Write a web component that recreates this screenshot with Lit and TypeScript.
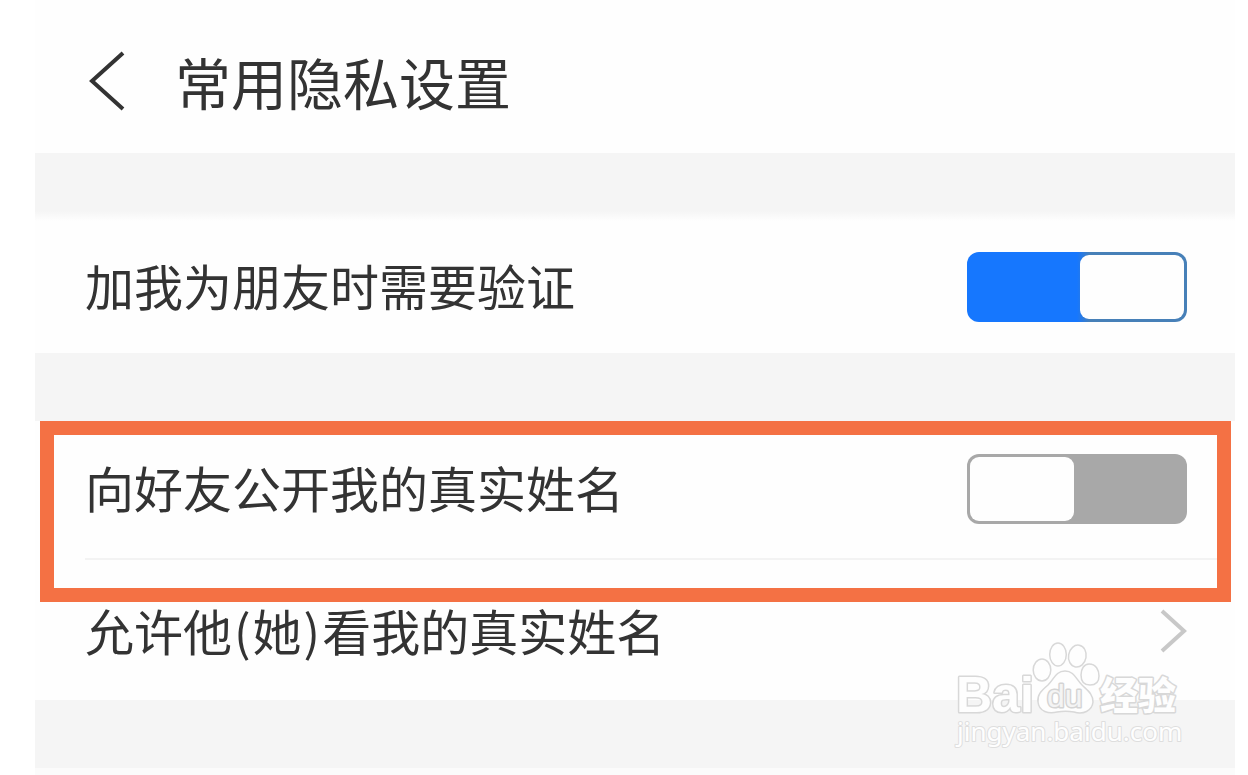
import { LitElement, html, css, svg } from "lit";
import { customElement, property } from "lit/decorators.js";

@customElement("setting-switch")
class SettingSwitch extends LitElement {
  @property({ type: Boolean }) on = false;
  @property() label = "";

  static styles = css`
    :host {
      display: block;
      flex: none;
    }
    .switch {
      appearance: none;
      display: flex;
      box-sizing: border-box;
      width: 220px;
      height: 70px;
      margin: 0;
      padding: 3px;
      border-radius: 12px;
      background: #a8a8a8;
      cursor: pointer;
    }
    .switch::before {
      content: "";
      width: 104px;
      border-radius: 9px;
      background: #fefefe;
    }
    .switch:checked {
      justify-content: flex-end;
      background: linear-gradient(90deg, #1677fe 50%, #4780b8 56%);
    }
  `;

  render() {
    return html`<input
      class="switch"
      type="checkbox"
      role="switch"
      aria-label=${this.label}
      .checked=${this.on}
    />`;
  }
}

@customElement("brand-mark")
class BrandMark extends LitElement {
  static styles = css`
    :host {
      display: block;
    }
    .mark {
      display: block;
      overflow: visible;
    }
    .shape {
      fill: #fefefe;
      stroke: #d8d8d8;
      stroke-width: 1.5;
    }
    .word {
      fill: #fefefe;
      stroke: #d8d8d8;
      stroke-width: 3;
      paint-order: stroke;
      stroke-linejoin: round;
    }
    .latin {
      font: bold 50px "Liberation Sans", sans-serif;
    }
    .inner {
      font: 32px "Liberation Sans", sans-serif;
      fill: #f4f4f4;
      stroke: #d4d4d4;
    }
    .han {
      font: 900 38px "Noto Sans CJK SC", sans-serif;
    }
    .site {
      font: 26px "Noto Sans", sans-serif;
      stroke: #dedede;
      stroke-width: 2;
    }
  `;

  render() {
    return html`<svg class="mark" width="226" height="110" viewBox="0 0 226 110" aria-label="Baidu 经验">
      ${svg`
        <text class="word latin" x="1" y="70">Bai</text>
        <ellipse class="shape" cx="87" cy="28" rx="8.8" ry="11" />
        <ellipse class="shape" cx="103" cy="12.500" rx="8.300" ry="11.500" />
        <ellipse class="shape" cx="122.500" cy="14" rx="8.800" ry="11" transform="rotate(10 122 13)" />
        <path class="shape" d="M134 22C141 22 144 28 144 34C144 40 141 43 135 43C128 43 126 38 126 33C126 27 129 22 134 22Z" />
        <path class="shape" d="M110 29C101 29 99 37 93 43C86 49 82 53 83 60C84 70 94 72 102 70C108 69 113 69 119 70C128 73 137 69 138 60C138 52 133 49 127 43C121 37 119 29 110 29Z" />
        <text class="word inner" x="92" y="65">du</text>
        <text class="word han" x="145" y="67">经验</text>
        <text class="word site" x="2" y="99">jingyan.baidu.com</text>
      `}
    </svg>`;
  }
}

@customElement("app-root")
class AppRoot extends LitElement {
  static styles = css`
    :host {
      display: block;
      min-height: 100vh;
      box-sizing: border-box;
      padding: 0 13px 0 35px;
      background: #ffffff;
      color: #333333;
      font-family: "Noto Sans CJK SC", sans-serif;
      overflow: hidden;
    }
    .page {
      position: relative;
      background: #fefefe;
    }
    .header {
      display: flex;
      align-items: center;
      gap: 48px;
      padding: 45px 52px 36px;
    }
    .back {
      display: block;
      margin: 0;
      padding: 0;
      border: 0;
      background: none;
      cursor: pointer;
    }
    .icon {
      display: block;
      fill: none;
    }
    .title {
      margin: 0;
      font-size: 56px;
      font-weight: 400;
      line-height: 72px;
    }
    .band {
      height: 68px;
      background: #f5f5f5;
    }
    .band.first {
      background: linear-gradient(#f5f5f5 58px, #fefefe);
    }
    .row {
      display: flex;
      align-items: center;
      justify-content: space-between;
      box-sizing: border-box;
      min-height: 132px;
      padding: 0 48px 0 50px;
      color: inherit;
      font-size: 49px;
      line-height: 64px;
      text-decoration: none;
    }
    .label {
      padding-bottom: 4px;
    }
    .framed {
      box-sizing: border-box;
      margin: 0 4px 0 5px;
      padding-left: 31px;
      border: 14px solid #f47144;
      background: #fefefe;
    }
    .framed .row {
      min-height: 125px;
      padding: 0 30px 16px 0;
      border-bottom: 2px solid #f3f3f3;
    }
    .framed .rest {
      height: 28px;
    }
    .link {
      align-items: flex-start;
      min-height: 98px;
      line-height: 56px;
    }
    .paren {
      margin: 0 2px;
    }
    .brand {
      position: absolute;
      right: 54px;
      bottom: 24px;
    }
    .foot {
      height: 8px;
      background: #fbfbfb;
    }
  `;

  render() {
    return html`
      <main class="page">
        <header class="header">
          <button class="back" aria-label="返回">
            <svg class="icon" width="40" height="60" viewBox="0 0 40 60">
              <path d="M36 2L5 30L36 58" stroke="#333333" stroke-width="4" />
            </svg>
          </button>
          <h1 class="title">常用隐私设置</h1>
        </header>
        <div class="band first"></div>
        <div class="row">
          <span class="label">加我为朋友时需要验证</span>
          <setting-switch on label="加我为朋友时需要验证"></setting-switch>
        </div>
        <div class="band"></div>
        <section class="framed">
          <div class="row">
            <span class="label">向好友公开我的真实姓名</span>
            <setting-switch label="向好友公开我的真实姓名"></setting-switch>
          </div>
          <div class="rest"></div>
        </section>
        <a class="row link" href="#names">
          <span>允许他<span class="paren">(</span>她<span class="paren">)</span>看我的真实姓名</span>
          <svg class="icon" width="28" height="56" viewBox="0 0 28 56">
            <path d="M3 9L25 29L3 49" stroke="#c8c8c8" stroke-width="4" />
          </svg>
        </a>
        <div class="band"></div>
        <div class="foot"></div>
        <div class="brand"><brand-mark></brand-mark></div>
      </main>
    `;
  }
}
